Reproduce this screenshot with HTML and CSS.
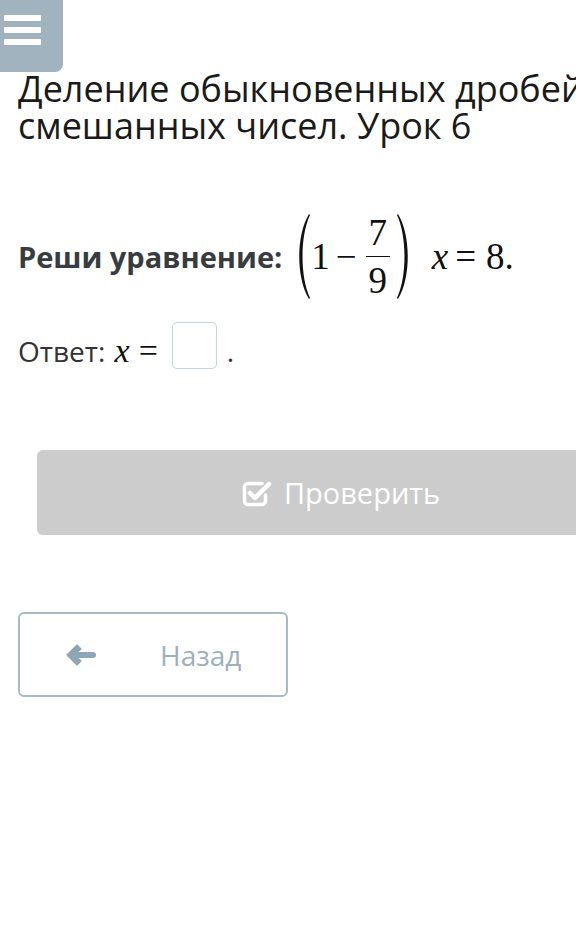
FILE: index.html
```html
<!DOCTYPE html>
<html lang="ru">
<head>
  <meta charset="UTF-8">
  <meta name="viewport" content="width=device-width, initial-scale=1.0">
  <title>Деление обыкновенных дробей и смешанных чисел. Урок 6</title>
  <link rel="stylesheet" href="styles.css">
</head>
<body>
  <div class="page">
    <div class="menu-button">
      <span class="menu-line"></span>
      <span class="menu-line"></span>
      <span class="menu-line"></span>
    </div>
    <h1 class="title">Деление обыкновенных дробей и смешанных чисел. Урок 6</h1>

    <div class="task">
      <span class="task-label">Реши уравнение:</span>
      <span class="math">
        <svg class="paren" width="18" height="87" viewBox="0 0 18 87">
          <path d="M16 1 C3 22 3 65 16 86 L17 85 C7 64 7 23 17 2 Z" fill="#111"/>
        </svg>
        <span class="mn">1</span>
        <span class="mo minus">&minus;</span>
        <span class="frac">
          <span class="num">7</span>
          <span class="bar"></span>
          <span class="den">9</span>
        </span>
        <svg class="paren paren-right" width="18" height="87" viewBox="0 0 18 87">
          <path d="M2 1 C15 22 15 65 2 86 L1 85 C11 64 11 23 1 2 Z" fill="#111"/>
        </svg>
        <span class="mi var-x">x</span>
        <span class="mo eq">=</span>
        <span class="mn eight">8.</span>
      </span>
    </div>

    <div class="answer">
      Ответ: <span class="answer-math"><span class="mi">x</span><span class="mo">=</span></span><span class="answer-box"></span><span class="answer-dot">.</span>
    </div>

    <button class="check-button">
      <svg class="check-icon" width="30" height="28" viewBox="0 0 30 28">
        <path d="M20 4.5 H6 a3.5 3.5 0 0 0 -3.5 3.5 V22 a3.5 3.5 0 0 0 3.5 3.5 H20 a3.5 3.5 0 0 0 3.5 -3.5 V16" fill="none" stroke="#fff" stroke-width="3.5" stroke-linecap="round"/>
        <path d="M8 14 L13 19 L27 5" fill="none" stroke="#fff" stroke-width="4.5" stroke-linecap="round" stroke-linejoin="round"/>
      </svg>
      Проверить
    </button>

    <button class="back-button">
      <svg class="back-icon" width="30" height="22" viewBox="0 0 30 22">
        <path d="M1.5 11 L11 1.5 L14.5 5 L10 9 H27 a2 2 0 0 1 0 4 H10 L14.5 17 L11 20.5 Z" fill="#8fa6b4" stroke="#8fa6b4" stroke-width="2" stroke-linejoin="round"/>
      </svg>
      <span class="back-text">Назад</span>
    </button>
  </div>
</body>
</html>
```

FILE: styles.css
```css
html, body {
  overflow-x: hidden;
}
body {
  margin: 0;
  padding: 0;
  background-color: #ffffff;
  font-family: "Open Sans", "Noto Sans", sans-serif;
  color: #1c1c1c;
}
.page {
  width: 682px;
}
.menu-button {
  width: 63px;
  height: 72px;
  box-sizing: border-box;
  padding: 15px 0 0 4px;
  background-color: #a0b3bf;
  border-bottom-right-radius: 8px;
  display: flex;
  flex-direction: column;
  gap: 6px;
}
.menu-line {
  display: block;
  width: 37px;
  height: 6px;
  border-radius: 1px;
  background-color: #ffffff;
}
.title {
  margin: -2px 0 0;
  padding: 0 18px;
  font-size: 36px;
  font-weight: 400;
  line-height: 37px;
  color: #1a1a1a;
}
.task {
  display: flex;
  align-items: center;
  margin: 69px 0 0 18px;
}
.task-label {
  font-size: 29px;
  font-weight: 700;
  color: #373c41;
  margin-right: 11px;
}
.math {
  display: flex;
  align-items: center;
  font-family: "Liberation Serif", "DejaVu Serif", serif;
  font-size: 37px;
  line-height: 1;
  color: #111111;
}
.paren {
  display: block;
}
.minus {
  margin-left: 6px;
}
.frac {
  display: flex;
  flex-direction: column;
  align-items: center;
  margin-left: 9px;
}
.num {
  padding-bottom: 5px;
}
.den {
  padding-top: 5px;
}
.bar {
  width: 24px;
  height: 1.5px;
  background-color: #111111;
}
.paren-right {
  margin-left: 6px;
}
.var-x {
  margin-left: 18px;
}
.mi {
  font-style: italic;
}
.eq {
  margin-left: 7px;
}
.eight {
  margin-left: 10px;
}
.answer {
  margin: 22px 0 0 18px;
  font-size: 28px;
  line-height: 48px;
  color: #333333;
}
.answer-math {
  margin-left: 2px;
  font-family: "Liberation Serif", "DejaVu Serif", serif;
  font-size: 34px;
  color: #111111;
}
.answer-math .mo {
  margin-left: 9px;
}
.answer-box {
  display: inline-block;
  width: 45px;
  height: 47px;
  box-sizing: border-box;
  margin-left: 14px;
  border: 1.5px solid #c5d5da;
  border-radius: 5px;
  vertical-align: -7px;
}
.answer-dot {
  margin-left: 10px;
}
.check-button {
  display: flex;
  align-items: center;
  justify-content: center;
  gap: 12px;
  width: 608px;
  height: 85px;
  margin: 75px 0 0 37px;
  border: none;
  border-radius: 6px;
  background-color: #cccccc;
  color: #ffffff;
  font-family: "Open Sans", "Noto Sans", sans-serif;
  font-size: 29px;
}
.back-button {
  display: flex;
  align-items: center;
  width: 270px;
  height: 85px;
  margin: 77px 0 0 18px;
  padding: 0 0 0 46px;
  box-sizing: border-box;
  border: 2px solid #a9b9c1;
  border-radius: 6px;
  background-color: #ffffff;
  font-family: "Open Sans", "Noto Sans", sans-serif;
  font-size: 28px;
  color: #9eafb9;
}
.back-text {
  margin-left: 64px;
}
```
